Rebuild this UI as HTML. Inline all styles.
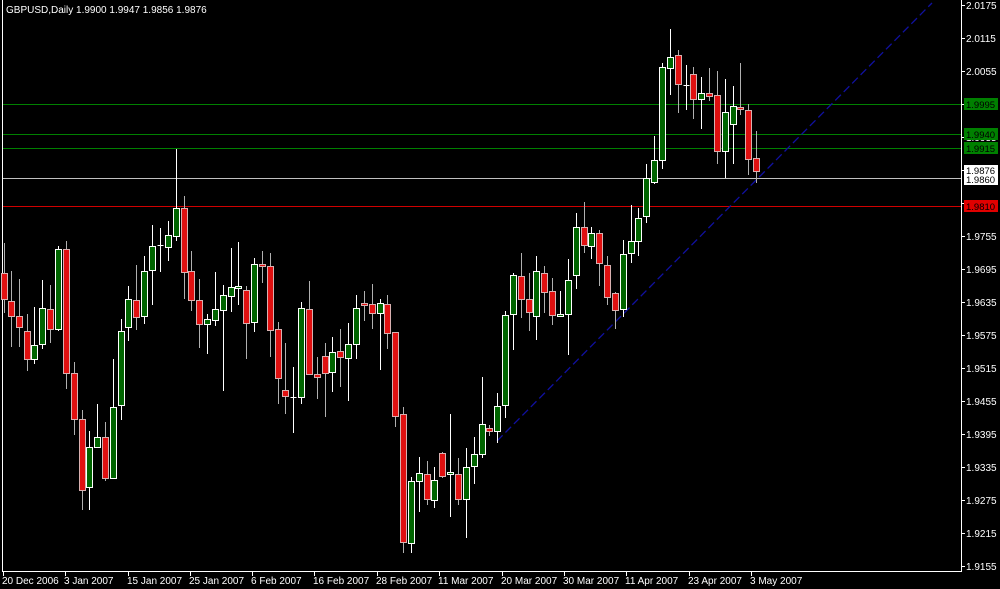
<!DOCTYPE html>
<html><head><meta charset="utf-8"><style>
html,body{margin:0;padding:0;background:#000;}
svg{display:block;}
text{font-family:"Liberation Sans",sans-serif;font-size:10px;fill:#fff;}
text.s{font-size:9.5px;}
</style></head><body>
<svg id="c" width="1000" height="589" xmlns="http://www.w3.org/2000/svg">
<rect width="1000" height="589" fill="#000"/>
<line x1="2.5" y1="0" x2="2.5" y2="572" stroke="#fff"/>
<line x1="961.5" y1="0" x2="961.5" y2="572" stroke="#fff"/>
<line x1="2" y1="571.5" x2="962" y2="571.5" stroke="#fff"/>
<g id="lines">
<line x1="3" y1="104.5" x2="961" y2="104.5" stroke="#008000"/>
<line x1="3" y1="134.5" x2="961" y2="134.5" stroke="#008000"/>
<line x1="3" y1="148.5" x2="961" y2="148.5" stroke="#008000"/>
<line x1="3" y1="178.5" x2="961" y2="178.5" stroke="#c0c0c0"/>
<line x1="3" y1="206.5" x2="961" y2="206.5" stroke="#d00000"/>
<line x1="497" y1="441" x2="932" y2="3" stroke="#1010a0" stroke-width="1.3" stroke-dasharray="8,4"/>
</g>
<g id="candles"></g>
<g id="axis">
<text x="6" y="13">GBPUSD,Daily  1.9900 1.9947 1.9856 1.9876</text>
</g>
</svg>
<script>
var d=[[4,273,299,243,313,'r'],[11,301,316,271,347,'r'],[19,316,327,279,347,'r'],[27,331,359,314,371,'r'],[34,345,359,307,364,'g'],[42,308,344,280,349,'g'],[50,309,329,285,343,'r'],[58,249,329,246,331,'g'],[66,249,373,241,389,'r'],[74,373,419,362,435,'r'],[82,419,490,410,510,'r'],[89,447,487,431,510,'g'],[97,437,447,404,448,'g'],[105,437,478,422,481,'r'],[113,407,478,359,479,'g'],[121,331,405,319,420,'g'],[128,299,327,286,341,'g'],[136,300,317,265,330,'r'],[144,271,316,256,324,'g'],[152,246,270,225,305,'g'],[160,245,245,228,272,'g'],[168,235,247,221,261,'g'],[176,208,236,149,241,'g'],[184,208,272,196,299,'r'],[191,271,300,251,311,'r'],[199,300,324,279,348,'r'],[207,319,324,314,354,'g'],[215,309,320,272,326,'g'],[223,295,310,285,391,'g'],[231,287,296,248,312,'g'],[238,286,288,242,305,'g'],[246,290,323,286,359,'r'],[254,264,322,258,332,'g'],[262,264,266,251,283,'r'],[270,266,330,253,357,'r'],[278,329,378,322,404,'r'],[285,390,396,343,414,'r'],[293,397,397,367,433,'g'],[301,308,397,302,404,'g'],[309,309,374,281,375,'r'],[317,374,377,357,399,'r'],[325,356,373,343,417,'r'],[332,352,372,337,392,'g'],[340,351,357,329,387,'r'],[348,344,358,323,401,'g'],[356,308,344,295,359,'g'],[364,303,305,291,321,'r'],[372,304,313,284,329,'r'],[380,303,313,299,370,'g'],[387,304,333,295,349,'r'],[395,332,416,332,427,'r'],[403,414,542,407,553,'r'],[411,481,543,477,553,'g'],[419,473,481,457,512,'g'],[427,474,499,461,505,'r'],[434,480,500,467,508,'g'],[442,453,476,452,478,'r'],[450,472,474,414,517,'g'],[458,474,499,458,505,'r'],[466,467,499,448,538,'g'],[474,454,466,437,484,'g'],[482,424,454,377,458,'g'],[489,428,431,425,436,'r'],[497,406,431,393,443,'g'],[505,315,405,311,418,'g'],[513,275,314,273,350,'g'],[521,276,299,253,318,'r'],[529,299,312,273,331,'r'],[536,271,316,256,340,'g'],[544,273,292,266,313,'r'],[552,291,315,278,325,'r'],[560,314,316,291,317,'g'],[568,280,314,259,355,'g'],[576,227,275,213,289,'g'],[584,227,245,202,253,'r'],[591,233,246,227,259,'g'],[599,233,263,230,286,'r'],[607,265,297,256,305,'r'],[615,293,310,292,329,'r'],[623,254,309,240,317,'g'],[631,241,253,205,263,'g'],[638,218,241,208,256,'g'],[646,178,216,164,223,'g'],[654,160,182,136,184,'g'],[662,67,160,63,169,'g'],[670,57,68,29,95,'g'],[678,55,84,50,113,'r'],[686,85,85,65,110,'g'],[693,74,99,67,119,'r'],[701,93,99,77,129,'g'],[709,93,96,68,101,'r'],[717,95,151,71,164,'r'],[725,112,151,79,178,'g'],[733,106,124,86,164,'g'],[740,107,109,63,115,'r'],[748,110,159,104,175,'r'],[756,158,171,131,183,'r']];
var ns="http://www.w3.org/2000/svg",g=document.getElementById('candles');
function el(t,a){var e=document.createElementNS(ns,t);for(var k in a)e.setAttribute(k,a[k]);g.appendChild(e);return e;}
d.forEach(function(c){var x=c[0]+0.5,gr=c[5]=='g';
el('line',{x1:x,y1:c[3],x2:x,y2:c[4],stroke:gr?'#fff':'#b0b0b0'});
var h=Math.max(c[2]-c[1],1);
if(c[2]-c[1]<1){el('line',{x1:x-3,y1:c[1]+0.5,x2:x+3,y2:c[1]+0.5,stroke:'#fff'});}
else el('rect',{x:c[0]-3+0.5,y:c[1]+0.5,width:6,height:h,fill:gr?'#006400':'#e01010',stroke:gr?'#fff':'#d8b0b0'});
});
var ax=document.getElementById('axis');
function tx(x,y,s,f,cl){var e=document.createElementNS(ns,'text');e.setAttribute('x',x);e.setAttribute('y',y);if(f)e.setAttribute('style','fill:'+f);if(cl)e.setAttribute('class',cl);e.textContent=s;ax.appendChild(e);}
function ln(x1,y1,x2,y2,c){var e=document.createElementNS(ns,'line');e.setAttribute('x1',x1);e.setAttribute('y1',y1);e.setAttribute('x2',x2);e.setAttribute('y2',y2);e.setAttribute('stroke',c||'#fff');ax.appendChild(e);}
var p=['2.0175','2.0115','2.0055','1.9995','1.9935','1.9875','1.9815','1.9755','1.9695','1.9635','1.9575','1.9515','1.9455','1.9395','1.9335','1.9275','1.9215','1.9155'];
p.forEach(function(s,i){var y=5+i*33;ln(961,y+0.5,965,y+0.5);tx(966,y+4,s);});
function box(y,s,bg,fg){var r=document.createElementNS(ns,'rect');r.setAttribute('x',964);r.setAttribute('y',y);r.setAttribute('width',34);r.setAttribute('height',12);r.setAttribute('fill',bg);ax.appendChild(r);tx(966,y+10,s,fg,'s');}
box(98,'1.9995','#008000','#000');box(128,'1.9940','#008000','#000');box(142,'1.9915','#008000','#000');
var r=document.createElementNS(ns,'rect');r.setAttribute('x',964);r.setAttribute('y',165);r.setAttribute('width',34);r.setAttribute('height',20);r.setAttribute('fill','#fff');ax.appendChild(r);
tx(966,174,'1.9876','#000','s');tx(966,183,'1.9860','#000','s');
box(200,'1.9810','#e00000','#000');
var dts=[[3,'20 Dec 2006'],[65,'3 Jan 2007'],[128,'15 Jan 2007'],[190,'25 Jan 2007'],[252,'6 Feb 2007'],[314,'16 Feb 2007'],[377,'28 Feb 2007'],[439,'11 Mar 2007'],[502,'20 Mar 2007'],[564,'30 Mar 2007'],[626,'11 Apr 2007'],[689,'23 Apr 2007'],[751,'3 May 2007']];
dts.forEach(function(t){ln(t[0]+0.5,571,t[0]+0.5,576);tx(t[0]-1,584,t[1]);});
</script>
</body></html>
